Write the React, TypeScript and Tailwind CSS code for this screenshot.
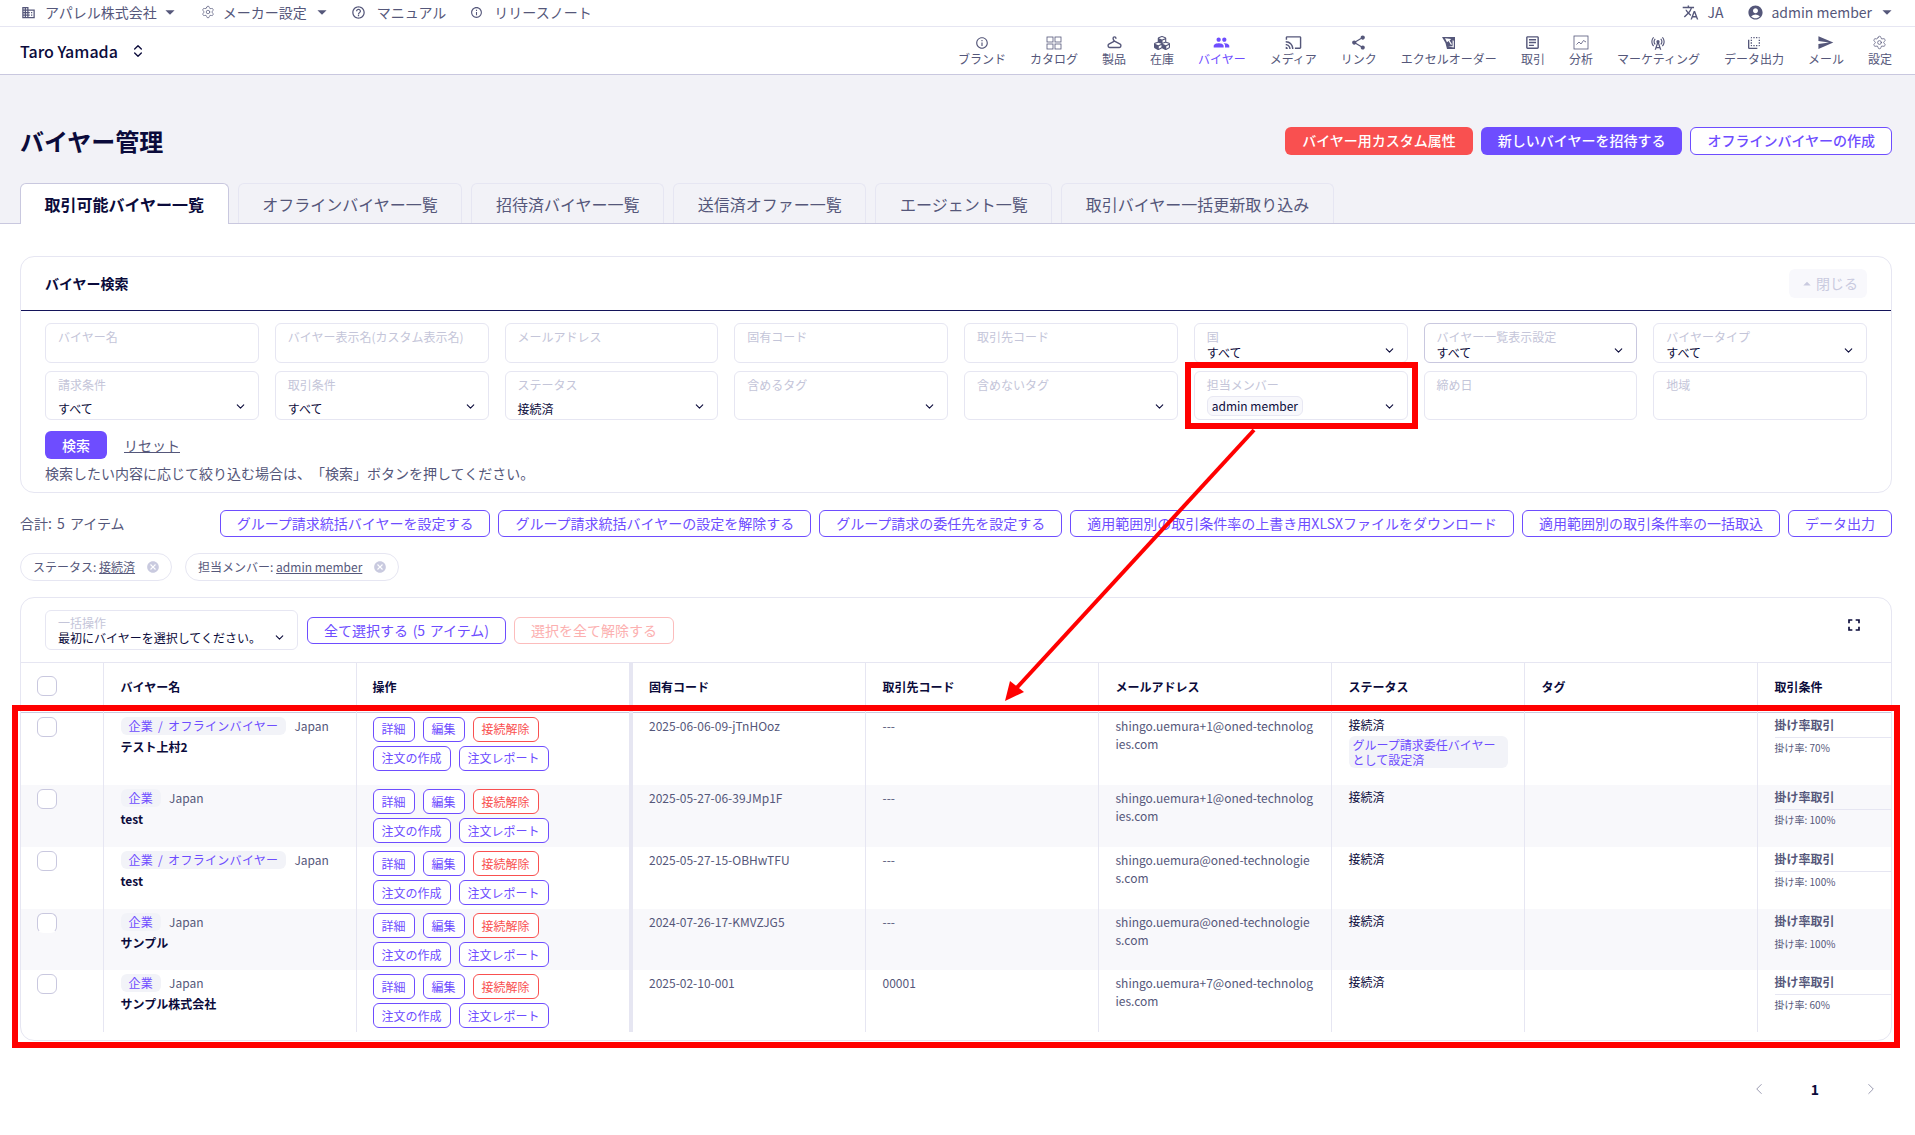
import { ChevronDown, ChevronLeft, ChevronRight, ChevronsUpDown, Settings } from "lucide-react";
import { FaCubes } from "react-icons/fa";
import {
  MdAccountCircle,
  MdArrowDropDown,
  MdArrowDropUp,
  MdCancel,
  MdFlipToBack,
  MdFullscreen,
  MdHelpOutline,
  MdInfoOutline,
  MdOutlineArticle,
  MdOutlineBusiness,
  MdOutlineCast,
  MdOutlineCellTower,
  MdPeople,
  MdSend,
  MdShare,
  MdTranslate,
} from "react-icons/md";
import { TbHanger } from "react-icons/tb";

const CatalogIcon = () => (
  <svg width="16" height="14" viewBox="0 0 16 14" fill="none" stroke="currentColor" strokeWidth="0.8">
    <rect x="1" y="1" width="6" height="5" />
    <rect x="9" y="1" width="6" height="5" />
    <rect x="1" y="8" width="6" height="5" />
    <rect x="9" y="8" width="6" height="5" />
  </svg>
);

const ExcelOrderIcon = () => (
  <svg width="16" height="14" viewBox="0 0 16 14" fill="currentColor">
    <path d="M1 1h13v12H6L4.5 7 1 1zm3 1.3 2 4 1.6-1.2L10 9l1-.8-2.4-3.8L10.2 3 4 2.3zM7 10.5l5.8 1V4.8l-1.2-.6v6L7 10.5z" />
  </svg>
);

const ChartIcon = () => (
  <svg width="16" height="15" viewBox="0 0 16 15" fill="none" stroke="currentColor" strokeWidth="0.8">
    <rect x="1" y="1" width="14" height="13" />
    <path d="M3.5 9.5 6 7l2 2 2.5-3.5L13 7" />
  </svg>
);

const navItems = [
  { label: "ブランド", icon: <MdInfoOutline size={14} /> },
  { label: "カタログ", icon: <CatalogIcon /> },
  { label: "製品", icon: <TbHanger size={17} /> },
  { label: "在庫", icon: <FaCubes size={16} /> },
  { label: "バイヤー", icon: <MdPeople size={17} />, active: true },
  { label: "メディア", icon: <MdOutlineCast size={17} /> },
  { label: "リンク", icon: <MdShare size={17} /> },
  { label: "エクセルオーダー", icon: <ExcelOrderIcon /> },
  { label: "取引", icon: <MdOutlineArticle size={17} /> },
  { label: "分析", icon: <ChartIcon /> },
  { label: "マーケティング", icon: <MdOutlineCellTower size={16} /> },
  { label: "データ出力", icon: <MdFlipToBack size={16} /> },
  { label: "メール", icon: <MdSend size={17} /> },
  { label: "設定", icon: <Settings size={15} strokeWidth={1.2} /> },
];

const tabs = [
  "オフラインバイヤー一覧",
  "招待済バイヤー一覧",
  "送信済オファー一覧",
  "エージェント一覧",
  "取引バイヤー一括更新取り込み",
];

const bulkButtons = [
  "グループ請求統括バイヤーを設定する",
  "グループ請求統括バイヤーの設定を解除する",
  "グループ請求の委任先を設定する",
  "適用範囲別の取引条件率の上書き用XLSXファイルをダウンロード",
  "適用範囲別の取引条件率の一括取込",
  "データ出力",
];

const rows = [
  {
    type: "企業 / オフラインバイヤー",
    name: "テスト上村2",
    code: "2025-06-06-09-jTnHOoz",
    partner: "---",
    email: "shingo.uemura+1@oned-technologies.com",
    rate: "70%",
    delegate: true,
    height: "h-[73px]",
  },
  {
    type: "企業",
    name: "test",
    code: "2025-05-27-06-39JMp1F",
    partner: "---",
    email: "shingo.uemura+1@oned-technologies.com",
    rate: "100%",
    height: "h-[62px]",
  },
  {
    type: "企業 / オフラインバイヤー",
    name: "test",
    code: "2025-05-27-15-OBHwTFU",
    partner: "---",
    email: "shingo.uemura@oned-technologies.com",
    rate: "100%",
    height: "h-[62px]",
  },
  {
    type: "企業",
    name: "サンプル",
    code: "2024-07-26-17-KMVZJG5",
    partner: "---",
    email: "shingo.uemura@oned-technologies.com",
    rate: "100%",
    height: "h-[61px]",
    clipped: true,
  },
  {
    type: "企業",
    name: "サンプル株式会社",
    code: "2025-02-10-001",
    partner: "00001",
    email: "shingo.uemura+7@oned-technologies.com",
    rate: "60%",
    height: "h-[62px]",
  },
];

function Field({
  label,
  value,
  select,
  tall,
  strong,
  chip,
}: {
  label: string;
  value?: string;
  select?: boolean;
  tall?: boolean;
  strong?: boolean;
  chip?: string;
}) {
  return (
    <div
      className={`relative rounded-md border bg-white px-[12px] pt-[3.5px] text-[12px] ${tall ? "h-[49px]" : "h-[40px]"} ${
        strong ? "border-[#c9c8df]" : "border-[#e6e6f2]"
      }`}
    >
      <div className="leading-[18px] text-[#c4c5d9]">{label}</div>
      {value && <div className={`leading-[15px] text-[#0b0b3b] ${tall ? "mt-[7px]" : "mt-[-1px]"}`}>{value}</div>}
      {chip && (
        <div className="mt-[2px] inline-block rounded-md border border-[#e8e8f3] bg-[#f8f8fc] px-[4px] leading-[18px] text-[#0b0b3b]">
          {chip}
        </div>
      )}
      {select && (
        <ChevronDown
          size={13}
          className={`absolute right-[11px] text-[#0b0b3b] ${tall ? "top-[28px]" : "top-[20px]"}`}
        />
      )}
    </div>
  );
}

function OutlineButton({ children, small, red }: { children: React.ReactNode; small?: boolean; red?: boolean }) {
  return (
    <button
      className={`whitespace-nowrap rounded-md border bg-white ${small ? "h-[25px] px-[8px] text-[12px]" : "h-[27px] px-[16px] text-[14px] [word-spacing:1.5px]"} ${
        red ? "border-[#f95050] text-[#f95050]" : "border-[#6e4dff] text-[#6e4dff]"
      }`}
    >
      {children}
    </button>
  );
}

function Chip({ label, value }: { label: string; value: string }) {
  return (
    <div className="flex h-[28px] items-center gap-[11px] rounded-full border border-[#e6e6f2] pl-[12px] pr-[11px] text-[12px] text-[#55577a]">
      <span>
        {label}: <span className="underline">{value}</span>
      </span>
      <MdCancel size={14} className="text-[#c9cadf]" />
    </div>
  );
}

function Checkbox({ clipped }: { clipped?: boolean }) {
  return (
    <div className={`h-[20px] w-[20px] rounded-[6px] border border-[#c9c8df] bg-white ${clipped ? "border-b-transparent" : ""}`} />
  );
}

export default function App() {
  return (
    <div className="relative min-h-[1135px] w-[1915px] overflow-hidden bg-white font-['Noto_Sans_CJK_JP',sans-serif] text-[#0b0b3b]">
      <div className="flex h-[27px] items-center justify-between border-b border-[#e6e6f2] pb-[2px] pl-[21px] pr-[23px] text-[14px] text-[#55577a]">
        <div className="flex items-center">
          <MdOutlineBusiness size={15} />
          <span className="ml-[9px]">アパレル株式会社</span>
          <MdArrowDropDown size={22} className="ml-[2px]" />
          <Settings size={14} strokeWidth={1.2} className="ml-[20px]" />
          <span className="ml-[8px]">メーカー設定</span>
          <MdArrowDropDown size={22} className="ml-[4px]" />
          <MdHelpOutline size={15} className="ml-[18px]" />
          <span className="ml-[11px]">マニュアル</span>
          <MdInfoOutline size={13} className="ml-[24px]" />
          <span className="ml-[11px]">リリースノート</span>
        </div>
        <div className="flex items-center">
          <MdTranslate size={17} />
          <span className="ml-[8px]">JA</span>
          <MdAccountCircle size={17} className="ml-[24px]" />
          <span className="ml-[7px]">admin member</span>
          <MdArrowDropDown size={22} className="ml-[4px] mr-[-6px]" />
        </div>
      </div>

      <div className="flex h-[48px] items-center justify-between border-b border-[#c9c8df] pl-[20px] pr-[23px]">
        <div className="flex items-center gap-[12px] text-[16px] font-medium">
          Taro Yamada
          <ChevronsUpDown size={16} />
        </div>
        <nav className="flex gap-[24px]">
          {navItems.map((item) => (
            <div
              key={item.label}
              className={`flex flex-col items-center text-[12px] leading-[16px] ${item.active ? "text-[#6e4dff]" : "text-[#55577a]"}`}
            >
              <div className="flex h-[17px] items-center">{item.icon}</div>
              <span className="whitespace-nowrap">{item.label}</span>
            </div>
          ))}
        </nav>
      </div>

      <div className="border-b border-[#c9c8df] bg-[#f2f2f7] pl-[20px] pr-[23px]">
        <div className="flex items-center justify-between pt-[52px]">
          <h1 className="text-[24px] font-bold leading-[28px]">バイヤー管理</h1>
          <div className="flex gap-[8px] text-[14px] font-medium">
            <button className="h-[28px] rounded-md bg-[#f95050] px-[17px] pb-[1px] text-white">バイヤー用カスタム属性</button>
            <button className="h-[28px] rounded-md bg-[#6e4dff] px-[17px] pb-[1px] text-white">新しいバイヤーを招待する</button>
            <button className="h-[28px] rounded-md border border-[#6e4dff] bg-white px-[16px] pb-[1px] text-[#6e4dff]">
              オフラインバイヤーの作成
            </button>
          </div>
        </div>
        <div className="mb-[-1px] mt-[28px] flex gap-[9px] text-[16px]">
          <div className="flex h-[41px] items-center rounded-t-md border border-b-0 border-[#c9c8df] bg-white px-[23.6px] font-bold">
            取引可能バイヤー一覧
          </div>
          {tabs.map((tab) => (
            <div
              key={tab}
              className="flex h-[40px] items-center rounded-t-md border border-b-0 border-[#e6e6f2] px-[23.6px] text-[#55577a]"
            >
              {tab}
            </div>
          ))}
        </div>
      </div>

      <div className="pl-[20px] pr-[23px] pt-[32px]">
        <section className="h-[237px] rounded-[14px] border border-[#e6e6f2] bg-white">
          <div className="flex h-[54px] items-center justify-between border-b border-[#14145a] px-[24px]">
            <h2 className="text-[14px] font-bold">バイヤー検索</h2>
            <button className="flex h-[29px] w-[78px] items-center justify-center rounded-md bg-[#f8f8fc] text-[14px] text-[#c9cadf]">
              <MdArrowDropUp size={18} />
              閉じる
            </button>
          </div>
          <div className="px-[24px] pt-[12px]">
            <div className="grid grid-cols-8 gap-x-[16px] gap-y-[8px]">
              <Field label="バイヤー名" />
              <Field label="バイヤー表示名(カスタム表示名)" />
              <Field label="メールアドレス" />
              <Field label="固有コード" />
              <Field label="取引先コード" />
              <Field label="国" value="すべて" select />
              <Field label="バイヤー一覧表示設定" value="すべて" select strong />
              <Field label="バイヤータイプ" value="すべて" select />
              <Field label="請求条件" value="すべて" select tall />
              <Field label="取引条件" value="すべて" select tall />
              <Field label="ステータス" value="接続済" select tall />
              <Field label="含めるタグ" select tall />
              <Field label="含めないタグ" select tall />
              <Field label="担当メンバー" chip="admin member" select tall />
              <Field label="締め日" tall />
              <Field label="地域" tall />
            </div>
            <div className="mt-[11px] flex items-center gap-[17px]">
              <button className="h-[28px] w-[62px] rounded-md bg-[#6e4dff] text-[14px] font-medium text-white">検索</button>
              <span className="text-[14px] text-[#55577a] underline">リセット</span>
            </div>
            <p className="mt-[3px] text-[14px] leading-[22px] text-[#55577a] [text-spacing-trim:space-all]">
              検索したい内容に応じて絞り込む場合は、「検索」ボタンを押してください。
            </p>
          </div>
        </section>

        <div className="mt-[17px] flex h-[27px] items-center justify-between">
          <span className="text-[14px] text-[#55577a] [word-spacing:2px]">合計: 5 アイテム</span>
          <div className="flex gap-[8px]">
            {bulkButtons.map((label) => (
              <OutlineButton key={label}>{label}</OutlineButton>
            ))}
          </div>
        </div>

        <div className="mt-[16px] flex gap-[13px]">
          <Chip label="ステータス" value="接続済" />
          <Chip label="担当メンバー" value="admin member" />
        </div>

        <section className="mt-[16px] h-[444px] overflow-hidden rounded-[14px] border border-[#e6e6f2] bg-white">
          <div className="relative flex h-[65px] items-center gap-[8px] border-b border-[#e6e6f2] pl-[24px]">
            <div className="relative mr-[1px] h-[40px] w-[253px] rounded-md border border-[#e6e6f2] px-[12px] pt-[4px] text-[12px] leading-[15px]">
              <div className="text-[#c4c5d9]">一括操作</div>
              <div>最初にバイヤーを選択してください。</div>
              <ChevronDown size={13} className="absolute right-[11px] top-[20px]" />
            </div>
            <OutlineButton>全て選択する (5 アイテム)</OutlineButton>
            <button className="h-[27px] rounded-md border border-[#fcbcbc] px-[16px] text-[14px] text-[#fcb0b0]">
              選択を全て解除する
            </button>
            <MdFullscreen size={20} className="absolute right-[27px] top-[17px]" />
          </div>
          <table className="w-full table-fixed border-collapse text-[12px]">
            <colgroup>
              <col className="w-[82px]" />
              <col className="w-[253px]" />
              <col className="w-[275px]" />
              <col className="w-[234px]" />
              <col className="w-[233px]" />
              <col className="w-[233px]" />
              <col className="w-[193px]" />
              <col className="w-[233px]" />
              <col className="w-[134px]" />
            </colgroup>
            <thead>
              <tr className="h-[49px] border-b border-[#c9c8df] text-left font-bold">
                <th className="pl-[16px] pb-[2px] align-middle">
                  <Checkbox />
                </th>
                <th className="border-l border-[#e6e6f2] pl-[17px]">バイヤー名</th>
                <th className="border-x border-[#e6e6f2] pl-[16px]">操作</th>
                <th className="border-l-[4px] border-[#e6e6f2] pl-[16px]">固有コード</th>
                <th className="border-l border-[#e6e6f2] pl-[17px]">取引先コード</th>
                <th className="border-l border-[#e6e6f2] pl-[17px]">メールアドレス</th>
                <th className="border-l border-[#e6e6f2] pl-[17px]">ステータス</th>
                <th className="border-l border-[#e6e6f2] pl-[17px]">タグ</th>
                <th className="border-l border-[#e6e6f2] pl-[17px]">取引条件</th>
              </tr>
            </thead>
            <tbody>
              {rows.map((row, i) => (
                <tr key={row.code} className={`${row.height} align-top ${i % 2 === 1 ? "bg-[#f8f8fb]" : ""}`}>
                  <td className="pl-[16px] pt-[4px]">
                    <Checkbox clipped={row.clipped} />
                  </td>
                  <td className="border-l border-[#e6e6f2] pl-[17px] pt-[4px]">
                    <div className="flex h-[18px] items-center">
                      <span className="rounded-md bg-[#f2f3f8] px-[8px] leading-[18px] tracking-[0.3px] text-[#6e4dff] [word-spacing:2px]">
                        {row.type}
                      </span>
                      <span className="ml-[8px] text-[#55577a]">Japan</span>
                    </div>
                    <div className="mt-[3px] font-bold leading-[18px]">{row.name}</div>
                  </td>
                  <td className="border-x border-[#e6e6f2] pl-[16px] pt-[4px]">
                    <div className="flex gap-[8px]">
                      <OutlineButton small>詳細</OutlineButton>
                      <OutlineButton small>編集</OutlineButton>
                      <OutlineButton small red>
                        接続解除
                      </OutlineButton>
                    </div>
                    <div className="mt-[4px] flex gap-[8px]">
                      <OutlineButton small>注文の作成</OutlineButton>
                      <OutlineButton small>注文レポート</OutlineButton>
                    </div>
                  </td>
                  <td className="border-l-[4px] border-[#e6e6f2] pl-[16px] pt-[4px] leading-[18px] text-[#55577a]">{row.code}</td>
                  <td className="border-l border-[#e6e6f2] pl-[17px] pt-[4px] leading-[18px] text-[#55577a]">{row.partner}</td>
                  <td className="border-l border-[#e6e6f2] px-[17px] pt-[4px] leading-[18px] text-[#55577a] break-all">{row.email}</td>
                  <td className="border-l border-[#e6e6f2] pl-[17px] pr-[16px] pt-[3px] leading-[18px]">
                    接続済
                    {row.delegate && (
                      <div className="mt-[2px] rounded-md bg-[#f2f3f8] px-[4px] py-[1px] leading-[15px] text-[#6e4dff]">
                        グループ請求委任バイヤーとして設定済
                      </div>
                    )}
                  </td>
                  <td className="border-l border-[#e6e6f2]" />
                  <td className="border-l border-[#e6e6f2] pl-[17px] pt-[3px]">
                    <div className={`border-b pb-[3px] font-bold leading-[18px] text-[#55577a] ${row.clipped ? "border-transparent" : "border-[#e6e6f2]"}`}>
                      掛け率取引
                    </div>
                    <div className="mt-[2px] text-[10px] leading-[15px] text-[#55577a]">掛け率: {row.rate}</div>
                  </td>
                </tr>
              ))}
            </tbody>
          </table>
        </section>

        <div className="mt-[34px] box-content flex h-[28px] items-center justify-end gap-[43px] pb-[46px] pr-[12px]">
          <ChevronLeft size={18} strokeWidth={1.2} className="text-[#8f90a8]" />
          <span className="text-[14px] font-bold">1</span>
          <ChevronRight size={18} strokeWidth={1.2} className="text-[#8f90a8]" />
        </div>
      </div>

      {/* annotation boxes drawn over the screenshot */}
      <div className="pointer-events-none absolute left-[1185px] top-[362px] h-[67px] w-[233px] border-[6px] border-[#ff0000]" />
      <div className="pointer-events-none absolute left-[12px] top-[705px] h-[343px] w-[1888px] border-[6px] border-[#ff0000]" />
      <svg className="pointer-events-none absolute left-0 top-0" width="1915" height="1135">
        <line x1="1254" y1="430" x2="1012" y2="693" stroke="#ff0000" strokeWidth="4" />
        <polygon points="1005,701 1010,681 1024,692" fill="#ff0000" />
      </svg>
    </div>
  );
}
